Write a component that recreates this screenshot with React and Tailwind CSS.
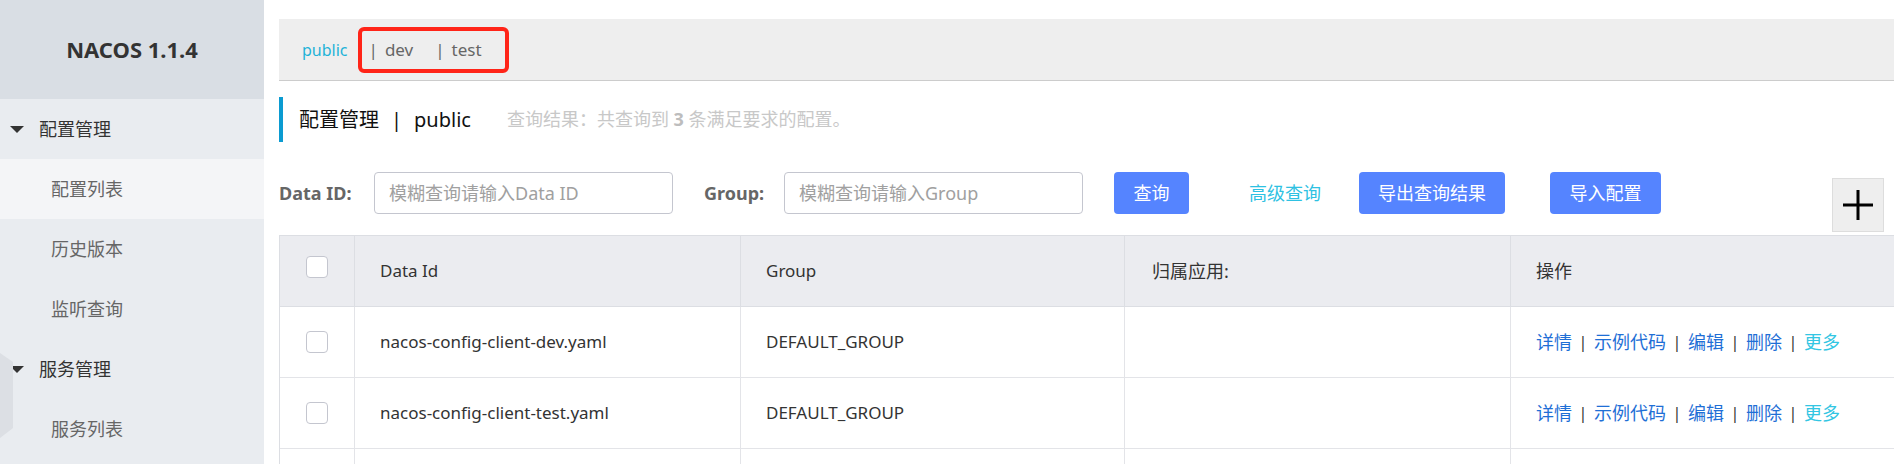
import React from 'react';

const font = { fontFamily: '"Noto Sans", "Noto Sans CJK SC", sans-serif' };

const menu = [
    { label: '配置管理', group: true },
    { label: '配置列表', active: true },
    { label: '历史版本' },
    { label: '监听查询' },
    { label: '服务管理', group: true },
    { label: '服务列表' },
];

const rows = [
    { dataId: 'nacos-config-client-dev.yaml', group: 'DEFAULT_GROUP' },
    { dataId: 'nacos-config-client-test.yaml', group: 'DEFAULT_GROUP' },
];

const Caret = () => (
    <svg width="14" height="7" viewBox="0 0 14 7" className="shrink-0">
        <polygon points="0,0 14,0 7,7" fill="#333" />
    </svg>
);

const Checkbox = () => (
    <span className="block w-[22px] h-[22px] rounded-[4px] border border-[#c4c6cf] bg-white" />
);

const Sidebar = () => (
    <div className="relative w-[264px] shrink-0 bg-[#e9ecf0] flex flex-col">
        <div className="h-[99px] shrink-0 bg-[#d9dee4] flex items-center justify-center">
            <span className="text-[22px] font-bold text-[#333]">NACOS 1.1.4</span>
        </div>
        {menu.map((item) => (
            <div
                key={item.label}
                className={`h-[60px] shrink-0 flex items-center text-[18px] ${item.active ? 'bg-[#f4f5f7]' : ''} ${item.group ? 'pl-[10px] text-[#333]' : 'pl-[51px] text-[#666]'}`}
            >
                {item.group && <Caret />}
                <span className={item.group ? 'ml-[15px]' : ''}>{item.label}</span>
            </div>
        ))}
        {/* collapse handle */}
        <svg width="14" height="85" viewBox="0 0 14 85" className="absolute left-0 top-[353px]">
            <polygon points="0,0 13,9 13,75 0,85" fill="#dcdfe4" />
        </svg>
    </div>
);

const Sep = () => <span className="w-[22px] text-center text-[#333] text-[16px]">|</span>;

const Actions = () => (
    <div className="flex items-center text-[18px] text-[#1f6fd6]">
        <span>详情</span>
        <Sep />
        <span>示例代码</span>
        <Sep />
        <span>编辑</span>
        <Sep />
        <span>删除</span>
        <Sep />
        <span className="text-[#33c6e3]">更多</span>
    </div>
);

export default function App() {
    return (
        <div className="flex w-full h-[464px] overflow-hidden bg-white" style={font}>
            <Sidebar />

            <div className="flex-1 min-w-0 pl-[15px] pt-[19px] flex flex-col">
                {/* namespace bar */}
                <div className="h-[62px] shrink-0 bg-[#eeeeee] border-b border-[#cccccc] flex items-center pl-[23px] text-[16px]">
                    <span className="text-[#1fb3d8]">public</span>
                    <span className="ml-[10px] h-[46px] flex items-center border-[4px] border-[#ff2418] rounded-[6px] pl-[7px] pr-[23px] text-[#666] text-[17px]">
                        <span>|</span>
                        <span className="ml-[7px]">dev</span>
                        <span className="ml-[22px]">|</span>
                        <span className="ml-[7px]">test</span>
                    </span>
                </div>

                {/* title */}
                <div className="mt-[16px] h-[45px] shrink-0 border-l-4 border-[#0b9bd1] flex items-center pl-[16px]">
                    <span className="text-[20px] text-[#111]">配置管理</span>
                    <span className="mx-[12px] text-[20px] text-[#111]">|</span>
                    <span className="text-[20px] text-[#111]">public</span>
                    <span className="ml-[36px] text-[18px] text-[#c8c8c8]">
                        查询结果：共查询到 <b className="text-[#bdbdbd]">3</b> 条满足要求的配置。
                    </span>
                </div>

                {/* search */}
                <div className="mt-[30px] shrink-0 flex items-start">
                    <span className="w-[95px] h-[42px] flex items-center text-[18px] font-bold text-[#666]">Data ID:</span>
                    <div className="w-[299px] h-[42px] border border-[#c4c6cf] rounded-[4px] flex items-center pl-[14px] text-[18px] text-[#a0a0a0]">
                        模糊查询请输入Data ID
                    </div>
                    <span className="ml-[31px] w-[80px] h-[42px] flex items-center text-[18px] font-bold text-[#666]">Group:</span>
                    <div className="w-[299px] h-[42px] border border-[#c4c6cf] rounded-[4px] flex items-center pl-[14px] text-[18px] text-[#a0a0a0]">
                        模糊查询请输入Group
                    </div>
                    <button className="ml-[31px] w-[75px] h-[42px] rounded-[4px] bg-[#5584ff] text-white text-[18px]">查询</button>
                    <span className="ml-[60px] h-[42px] flex items-center text-[18px] text-[#2ec1e2]">高级查询</span>
                    <button className="ml-[38px] w-[146px] h-[42px] rounded-[4px] bg-[#5584ff] text-white text-[18px]">导出查询结果</button>
                    <button className="ml-[45px] w-[111px] h-[42px] rounded-[4px] bg-[#5584ff] text-white text-[18px]">导入配置</button>
                    <div className="ml-auto mr-[10px] mt-[6px] w-[52px] h-[54px] bg-[#eeeeee] border border-[#dddddd] flex items-center justify-center">
                        <svg width="30" height="30" viewBox="0 0 30 30">
                            <path d="M15 0V30M0 15H30" stroke="#000" strokeWidth="3" />
                        </svg>
                    </div>
                </div>

                {/* table */}
                <div className="mt-[3px] shrink-0 border-l border-t border-[#dcdee3] text-[#333]">
                    <div className="flex h-[71px] bg-[#ebecf0] border-b border-[#dcdee3]">
                        <div className="w-[75px] shrink-0 flex items-center justify-center pb-[8px] border-r border-[#dcdee3]"><Checkbox /></div>
                        <div className="w-[386px] shrink-0 flex items-center pl-[25px] text-[17px] border-r border-[#dcdee3]">Data Id</div>
                        <div className="w-[384px] shrink-0 flex items-center pl-[25px] text-[17px] border-r border-[#dcdee3]">Group</div>
                        <div className="w-[386px] shrink-0 flex items-center pl-[27px] text-[18px] border-r border-[#dcdee3]">归属应用:</div>
                        <div className="flex-1 flex items-center pl-[25px] text-[18px]">操作</div>
                    </div>
                    {rows.map((row) => (
                        <div key={row.dataId} className="flex h-[71px] border-b border-[#e3e4e8]">
                            <div className="w-[75px] shrink-0 flex items-center justify-center border-r border-[#e3e4e8]"><Checkbox /></div>
                            <div className="w-[386px] shrink-0 flex items-center pl-[25px] text-[17px] border-r border-[#e3e4e8]">{row.dataId}</div>
                            <div className="w-[384px] shrink-0 flex items-center pl-[25px] text-[17px] border-r border-[#e3e4e8]">{row.group}</div>
                            <div className="w-[386px] shrink-0 border-r border-[#e3e4e8]" />
                            <div className="flex-1 flex items-center pl-[25px]"><Actions /></div>
                        </div>
                    ))}
                    {/* next row, cut off by the window */}
                    <div className="flex h-[71px] border-b border-[#e3e4e8]">
                        <div className="w-[75px] shrink-0 border-r border-[#e3e4e8]" />
                        <div className="w-[386px] shrink-0 border-r border-[#e3e4e8]" />
                        <div className="w-[384px] shrink-0 border-r border-[#e3e4e8]" />
                        <div className="w-[386px] shrink-0 border-r border-[#e3e4e8]" />
                        <div className="flex-1" />
                    </div>
                </div>
            </div>
        </div>
    );
}
